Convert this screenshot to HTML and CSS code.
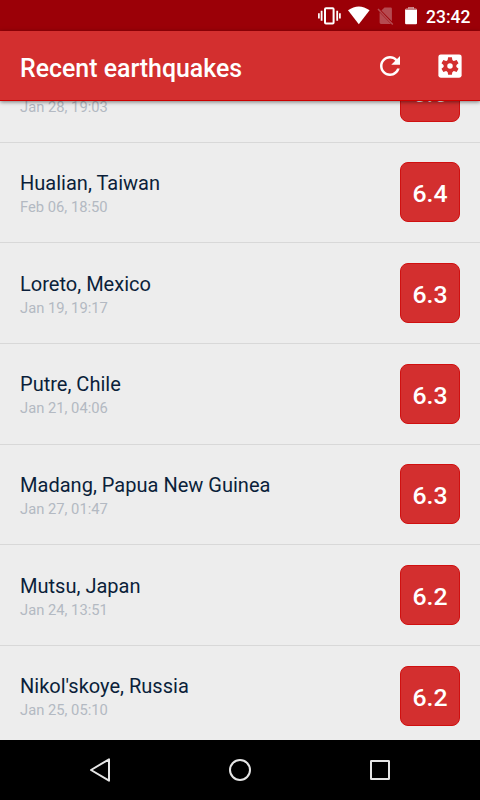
FILE: index.html
```html
<!DOCTYPE html>
<html lang="en">
<head>
<meta charset="utf-8">
<title>Recent earthquakes</title>
<link rel="stylesheet" href="styles.css">
</head>
<body>
<div class="screen">
  <div class="status">
    <svg class="status-icons" width="110" height="31" viewBox="310 0 110 31">
      <g fill="none" stroke="#fff">
        <rect x="325" y="8.200" width="8.600" height="15.200" rx="1" stroke-width="2"/>
        <path d="M321.600 10.800v10M337.200 10.800v10" stroke-width="1.800"/>
        <path d="M318.900 13.200v5.200M339.900 13.200v5.200" stroke-width="1.700"/>
      </g>
      <path d="M348 10.200Q358.800 2.600 369.600 10.200L358.800 24.300Z" fill="#fff"/>
      <path d="M384.500 7.500h6.200q1.200 0 1.200 1.200v12.600L381.400 10.600ZM379.600 12.300L391 24H381q-1.400 0-1.400-1.400Z" fill="#b54b51"/>
      <path d="M378 9L392.800 24.400" stroke="#b54b51" stroke-width="1.500"/>
      <path d="M408.500 7h5.200v1.800h2.200q1.100 0 1.100 1.100v13.300q0 1.100-1.100 1.100h-9.700q-1.100 0-1.100-1.100V9.900q0-1.100 1.100-1.100h2.300Z" fill="#fff"/>
      <path d="M408.500 7h5.200v1.800h2.200q1.100 0 1.100 1.100H405.100q0-1.100 1.100-1.100h2.300Z" fill="#c98084"/>
    </svg>
    <span class="clock">23:42</span>
  </div>
  <header class="appbar">
    <h1 class="title">Recent earthquakes</h1>
    <svg class="action" width="30" height="30" viewBox="0 0 24 24"><path fill="#fff" d="M17.650 6.350C16.200 4.900 14.210 4 12 4c-4.420 0-7.990 3.580-7.990 8s3.570 8 7.990 8c3.730 0 6.840-2.550 7.730-6h-2.080c-.82 2.330-3.040 4-5.650 4-3.310 0-6-2.690-6-6s2.690-6 6-6c1.660 0 3.140.69 4.220 1.780L13 11h7V4l-2.350 2.350z"/></svg>
    <svg class="action" width="30" height="30" viewBox="0 0 24 24">
      <rect x="2.700" y="2.700" width="18.600" height="18.600" rx="1.900" fill="#fff"/>
      <g fill="#d32f2f">
        <circle cx="12" cy="12" r="5.100"/>
        <path id="teeth" d="M10.500 5h3l.7 4h-4.400zM10.500 19h3l.7-4h-4.400z"/>
        <use href="#teeth" transform="rotate(60 12 12)"/>
        <use href="#teeth" transform="rotate(120 12 12)"/>
      </g>
      <circle cx="12" cy="12" r="2.200" fill="#fff"/>
    </svg>
  </header>
  <main class="viewport">
    <ul class="list">
      <li class="row"><div class="info"><div class="date">Jan 28, 19:03</div></div><div class="mag">6.6</div></li>
      <li class="row"><div class="info"><div class="place">Hualian, Taiwan</div><div class="date">Feb 06, 18:50</div></div><div class="mag">6.4</div></li>
      <li class="row"><div class="info"><div class="place">Loreto, Mexico</div><div class="date">Jan 19, 19:17</div></div><div class="mag">6.3</div></li>
      <li class="row"><div class="info"><div class="place">Putre, Chile</div><div class="date">Jan 21, 04:06</div></div><div class="mag">6.3</div></li>
      <li class="row"><div class="info"><div class="place">Madang, Papua New Guinea</div><div class="date">Jan 27, 01:47</div></div><div class="mag">6.3</div></li>
      <li class="row"><div class="info"><div class="place">Mutsu, Japan</div><div class="date">Jan 24, 13:51</div></div><div class="mag">6.2</div></li>
      <li class="row"><div class="info"><div class="place">Nikol'skoye, Russia</div><div class="date">Jan 25, 05:10</div></div><div class="mag">6.2</div></li>
    </ul>
  </main>
  <nav class="navbar">
    <svg width="30" height="30" viewBox="0 0 30 30"><path d="M6 15L24 4.300V25.700Z"/></svg>
    <svg width="30" height="30" viewBox="0 0 30 30"><circle cx="15" cy="15" r="10"/></svg>
    <svg width="30" height="30" viewBox="0 0 30 30"><rect x="6" y="6" width="18" height="18" rx=".3"/></svg>
  </nav>
</div>
</body>
</html>
```
FILE: styles.css
```css
* { box-sizing: border-box; }
body { margin: 0; font-family: Roboto, sans-serif; background: #ededed; }
.screen { width: 480px; height: 800px; display: flex; flex-direction: column; overflow: hidden; }
.status { height: 31px; flex: none; background: #9b0007; display: flex; align-items: center; justify-content: flex-end; padding-right: 10px; }
.status-icons { margin-right: 6px; margin-left: -1px; }
.clock { color: #fff; font-size: 17.500px; font-weight: 500; line-height: 20px; width: 44px; padding-top: 2px; white-space: nowrap; }
.appbar { height: 70px; flex: none; background: #d32f2f; border-bottom: 1px solid #cc0000; display: flex; align-items: center; gap: 30px; padding: 1px 15px 0 20px; position: relative; z-index: 1; box-shadow: 0 1px 4px rgba(0,0,0,.5); }
.title { flex: 1; margin: 0; font-size: 24.900px; font-weight: 500; color: #fff; line-height: 32px; padding-top: 5px; }
.viewport { flex: 1; overflow: hidden; background: #ededed; }
.list { list-style: none; margin: -59px 0 0; padding: 0; }
.row { height: 100.670px; border-bottom: 1px solid #d8d8d8; padding: 0 20px; display: flex; align-items: center; justify-content: space-between; }
.info { padding-top: 3px; }
.row:first-child .info { padding-top: 30px; }
.place { font-size: 20.050px; line-height: 26px; color: #0b1f3a; }
.date { font-size: 14.750px; line-height: 22px; color: #b3b9c2; }
.mag { width: 60px; height: 60px; border-radius: 8px; background: #d32f2f; border: 1px solid #d01010; color: #fff; font-size: 24.800px; font-weight: 500; line-height: 61px; text-align: center; }
.navbar { height: 60px; flex: none; background: #000; display: flex; align-items: center; justify-content: center; gap: 110px; }
.navbar svg { fill: none; stroke: #e6e6e6; stroke-width: 2; stroke-linejoin: round; }
```
